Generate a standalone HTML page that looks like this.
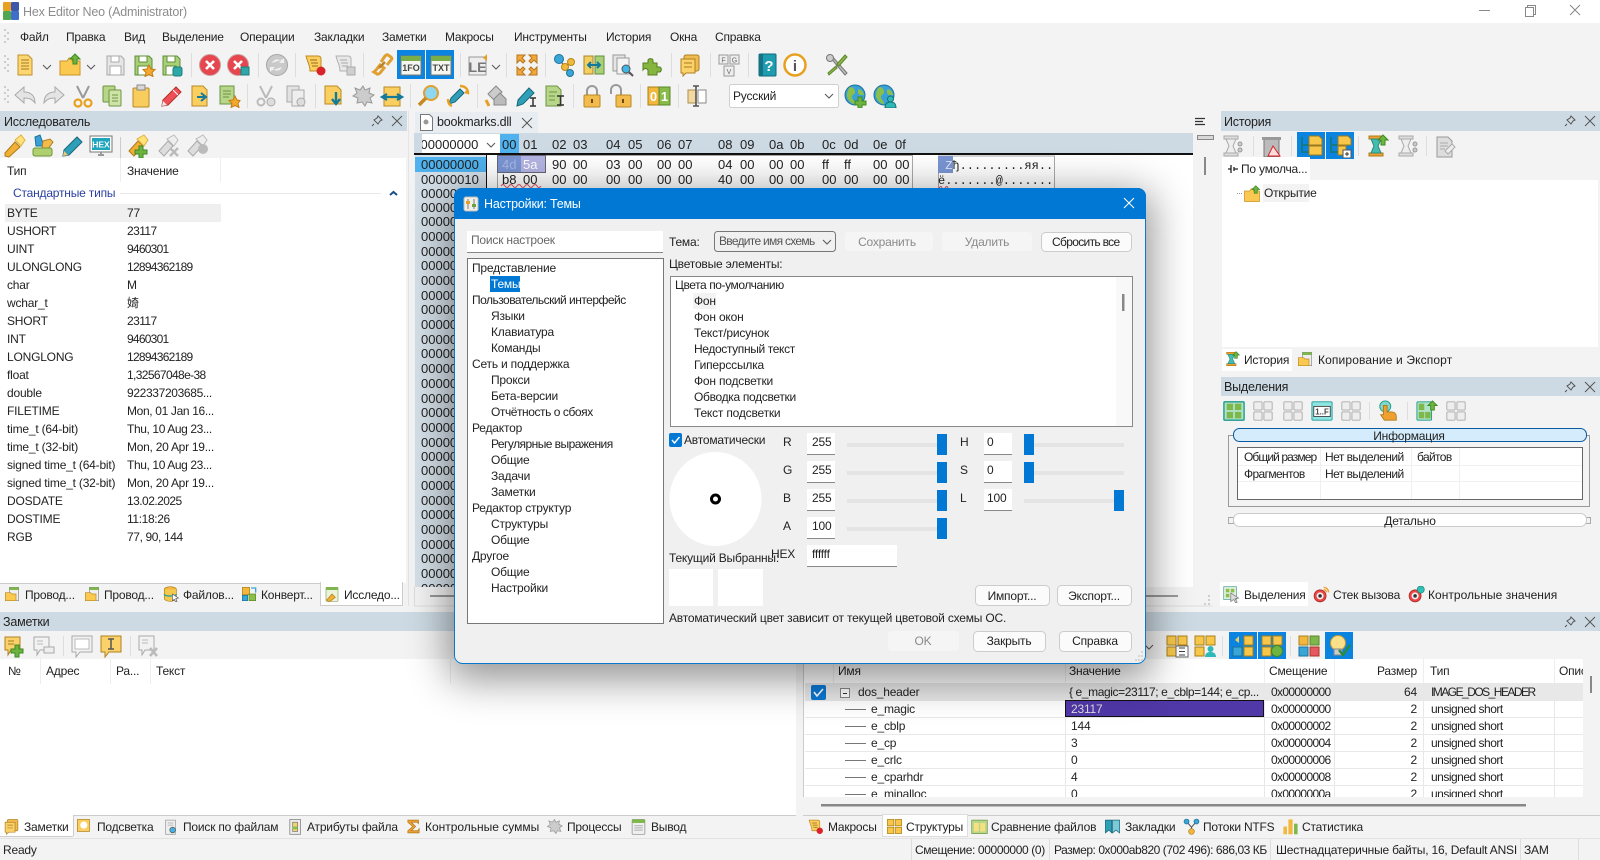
<!DOCTYPE html>
<html lang="ru"><head><meta charset="utf-8"><title>Hex Editor Neo</title>
<style>
html,body{margin:0;padding:0;width:1600px;height:860px;overflow:hidden;background:#f3f3f3}
svg{display:block;font-family:"Liberation Sans","Noto Sans CJK SC",sans-serif;font-size:12px;letter-spacing:-.2px;fill:#222}
svg text{white-space:pre}
.h{font-size:13px;letter-spacing:0}
.m{font-family:"Liberation Mono",monospace;letter-spacing:0}
.g{fill:#8a8a8a}
#dlg{position:absolute;left:454px;top:188px;width:692px;height:476px;border-radius:8px;box-shadow:0 10px 40px 6px rgba(0,0,0,.42)}
#base{position:absolute;left:0;top:0}
</style></head><body>
<svg id="base" width="1600" height="860" viewBox="0 0 1600 860">
<defs>
<symbol id="doc" viewBox="0 0 24 24"><path d="M5 2h10l4 4v16H5z" fill="#fcd771" stroke="#c2922f"/><path d="M8 7h8M8 10h8M8 13h8M8 16h8" stroke="#a87b1e"/></symbol>
<symbol id="fld" viewBox="0 0 24 24"><path d="M2 8h7l2-3h3v3h8v14H2z" fill="#fbc94f" stroke="#c89328"/><path d="M17 1l5 5h-3v5h-4V6h-3z" fill="#6fb43f" stroke="#3e8a25"/></symbol>
<symbol id="fg" viewBox="0 0 24 24"><path d="M4 3h14l3 3v16H4z" fill="#e6e6e6" stroke="#a9a9a9"/><rect x="8" y="3" width="8" height="6" fill="#fff" stroke="#aaa"/><rect x="7" y="13" width="11" height="9" fill="#fff" stroke="#aaa"/></symbol>
<symbol id="fs" viewBox="0 0 24 24"><path d="M3 3h14l3 3v16H3z" fill="#a9cf78" stroke="#5f8f35"/><rect x="7" y="3" width="8" height="6" fill="#fff" stroke="#5f8f35"/><rect x="6" y="13" width="10" height="9" fill="#fff" stroke="#5f8f35"/><path d="M17 12l2 4 4 .5-3 3 1 4-4-2-4 2 1-4-3-3 4-.5z" fill="#f3a92f" stroke="#c47c12"/></symbol>
<symbol id="fb" viewBox="0 0 24 24"><path d="M3 3h14l3 3v16H3z" fill="#a9cf78" stroke="#5f8f35"/><rect x="7" y="3" width="8" height="6" fill="#fff" stroke="#5f8f35"/><rect x="6" y="13" width="10" height="9" fill="#fff" stroke="#5f8f35"/><rect x="13" y="14" width="9" height="9" rx="2" fill="#2fa7a7" stroke="#1c7c7c"/></symbol>
<symbol id="xr" viewBox="0 0 24 24"><circle cx="12" cy="12" r="10.5" fill="#e6474f" stroke="#c8a0a0"/><path d="M8 8l8 8M16 8l-8 8" stroke="#fff" stroke-width="2.6"/></symbol>
<symbol id="xb" viewBox="0 0 24 24"><circle cx="11" cy="12" r="10.5" fill="#e6474f" stroke="#c8a0a0"/><path d="M7 8l8 8M15 8l-8 8" stroke="#fff" stroke-width="2.6"/><rect x="14" y="14" width="8" height="8" fill="#2fa7a7" stroke="#1c7c7c"/></symbol>
<symbol id="rf" viewBox="0 0 24 24"><circle cx="12" cy="12" r="10.5" fill="#c9c9c9" stroke="#a5a5a5"/><path d="M7 10a5.500 5.500 0 0 1 9-2l-2 2h5V5l-1.500 1.500M17 14a5.500 5.500 0 0 1-9 2l2-2H5v5l1.500-1.500" fill="#f0f0f0"/></symbol>
<symbol id="sc" viewBox="0 0 24 24"><path d="M3 3h12c2 0 3 1 3 3v12H7c0-3 0-3-1-6S4 7 3 3z" fill="#fbcf5f" stroke="#c08a20"/><path d="M7 7h7M8 10h7M9 13h6" stroke="#9a6e16"/><circle cx="18" cy="18" r="4.500" fill="#d8232a"/></symbol>
<symbol id="sg" viewBox="0 0 24 24"><path d="M3 3h12c2 0 3 1 3 3v12H7c0-3 0-3-1-6S4 7 3 3z" fill="#e8e8e8" stroke="#b0b0b0"/><path d="M7 7h7M8 10h7M9 13h6" stroke="#aaa"/><rect x="14" y="14" width="8" height="8" fill="#cfcfcf" stroke="#aaa"/></symbol>
<symbol id="ch" viewBox="0 0 24 24"><path d="M4 19l3 2c1 .5 2 0 3-1l4-5-4-3-4 5c-1 1-1 1.500-2 2zM11 9l4-6c1-1 2-1.500 3-1l3 2c1 1 1 2 0 3l-4 5" fill="none" stroke="#e0a030" stroke-width="3"/><path d="M9 15l6-6" stroke="#b8862a" stroke-width="2.500"/></symbol>
<symbol id="w1" viewBox="0 0 24 24"><rect x="2" y="3" width="20" height="19" fill="#f6f6f0" stroke="#777"/><rect x="2" y="3" width="20" height="5" fill="#79ad47"/><text x="12" y="18" text-anchor="middle" style="font-size:9px;font-weight:bold;letter-spacing:0;fill:#444">1FO</text></symbol>
<symbol id="w2" viewBox="0 0 24 24"><rect x="2" y="3" width="20" height="19" fill="#f6f6f0" stroke="#777"/><rect x="2" y="3" width="20" height="5" fill="#79ad47"/><text x="12" y="18" text-anchor="middle" style="font-size:9px;font-weight:bold;letter-spacing:0;fill:#444">TXT</text></symbol>
<symbol id="le" viewBox="0 0 24 24"><rect x="2" y="4" width="17" height="18" fill="#ededed" stroke="#999"/><text x="10.500" y="19" text-anchor="middle" style="font-size:14px;font-weight:bold;letter-spacing:0;fill:#777">LE</text><path d="M20 1v7l-4-3z" fill="#e8a020"/></symbol>
<symbol id="ar" viewBox="0 0 24 24"><path d="M2 2h8l-3 3 3 3-2 2-3-3-3 3zM22 2v8l-3-3-3 3-2-2 3-3-3-3zM2 22v-8l3 3 3-3 2 2-3 3 3 3zM22 22h-8l3-3-3-3 2-2 3 3 3-3z" fill="#f2a93a" stroke="#b6761b"/></symbol>
<symbol id="nd" viewBox="0 0 24 24"><path d="M6 6l6 8 6-5M12 14l5 6" stroke="#446" fill="none"/><circle cx="6" cy="6" r="4.500" fill="#3aa6d8" stroke="#1b7299"/><circle cx="18" cy="9" r="3.500" fill="#f2b93a" stroke="#b6861b"/><circle cx="12" cy="14" r="3.500" fill="#f2b93a" stroke="#b6861b"/><circle cx="17" cy="20" r="3.500" fill="#3aa6d8" stroke="#1b7299"/></symbol>
<symbol id="dc" viewBox="0 0 24 24"><rect x="2" y="3" width="9" height="18" fill="#f2cf5f" stroke="#a9842a"/><rect x="13" y="3" width="9" height="18" fill="#a9cf78" stroke="#5f8f35"/><path d="M6 12h12M9 9l-3 3 3 3M15 9l3 3-3 3" stroke="#157a9a" stroke-width="2" fill="none"/></symbol>
<symbol id="mg" viewBox="0 0 24 24"><rect x="2" y="2" width="12" height="16" fill="#e4e4e4" stroke="#9a9a9a"/><rect x="6" y="5" width="12" height="16" fill="#f4f4f4" stroke="#9a9a9a"/><circle cx="15" cy="16" r="4" fill="#41b6e6" stroke="#555"/><path d="M18 19l4 4" stroke="#555" stroke-width="2"/></symbol>
<symbol id="pz" viewBox="0 0 24 24"><path d="M3 10h5V7a3 3 0 0 1 5 0v3h4v4h3a3 3 0 0 1 0 5h-3v3H8v-5a3 3 0 0 0-5 0z" fill="#86b53f" stroke="#567f22"/></symbol>
<symbol id="nt" viewBox="0 0 24 24"><rect x="6" y="2" width="15" height="16" rx="2" fill="#f0bc52" stroke="#b08020"/><path d="M3 6h14v14H8l-3 3v-3H3z" fill="#fbd26a" stroke="#b08020"/><path d="M6 10h8M6 14h8" stroke="#a87b1e"/></symbol>
<symbol id="fv" viewBox="0 0 24 24"><rect x="2" y="2" width="9" height="9" fill="#eee" stroke="#999"/><rect x="13" y="2" width="9" height="9" fill="#eee" stroke="#999"/><rect x="7" y="13" width="10" height="10" fill="#eee" stroke="#999"/><text x="6.500" y="9.500" text-anchor="middle" style="font-size:7px;letter-spacing:0;fill:#666">F</text><text x="17.500" y="9.500" text-anchor="middle" style="font-size:7px;letter-spacing:0;fill:#666">G</text><text x="12" y="21" text-anchor="middle" style="font-size:7px;letter-spacing:0;fill:#666">V</text></symbol>
<symbol id="qb" viewBox="0 0 24 24"><rect x="4" y="1" width="17" height="22" rx="1" fill="#1f9cb0" stroke="#0d6a7c"/><rect x="4" y="1" width="4" height="22" fill="#147484"/><text x="14" y="18" text-anchor="middle" style="font-size:15px;font-weight:bold;letter-spacing:0;fill:#fff">?</text></symbol>
<symbol id="inf" viewBox="0 0 24 24"><circle cx="12" cy="12" r="10.500" fill="#fff" stroke="#e8a020" stroke-width="2.500"/><text x="12" y="18" text-anchor="middle" style="font-size:15px;font-weight:bold;letter-spacing:0;fill:#555">i</text></symbol>
<symbol id="tl" viewBox="0 0 24 24"><path d="M4 3l2-1 16 18-2 2z" fill="#bbb" stroke="#777"/><path d="M20 2l2 2-8 9-2-2zM11 13l-8 7 1 2 8-7z" fill="#8ab84a" stroke="#5c8428"/><circle cx="5" cy="5" r="3.500" fill="#ccc" stroke="#777"/></symbol>
<symbol id="ud" viewBox="0 0 24 24"><path d="M2 11l9-8v5c6 0 11 3 11 11-3-4-6-5-11-5v5z" fill="#e4e4e4" stroke="#aaa"/></symbol>
<symbol id="rd" viewBox="0 0 24 24"><path d="M22 11l-9-8v5C7 8 2 11 2 19c3-4 6-5 11-5v5z" fill="#e4e4e4" stroke="#aaa"/></symbol>
<symbol id="si" viewBox="0 0 24 24"><path d="M6 2l6 12M18 2l-6 12" stroke="#999" stroke-width="2"/><circle cx="7" cy="19" r="3.500" fill="none" stroke="#e8a020" stroke-width="2.200"/><circle cx="17" cy="19" r="3.500" fill="none" stroke="#e8a020" stroke-width="2.200"/></symbol>
<symbol id="cp" viewBox="0 0 24 24"><rect x="3" y="2" width="12" height="16" rx="1" fill="#b8d68a" stroke="#6b9440"/><rect x="9" y="6" width="12" height="16" rx="1" fill="#cfe3a8" stroke="#6b9440"/><path d="M12 11h6M12 14h6M12 17h6" stroke="#6b9440"/></symbol>
<symbol id="ps" viewBox="0 0 24 24"><rect x="4" y="4" width="16" height="19" rx="1" fill="#f8cd5e" stroke="#b88a24"/><rect x="8" y="1" width="8" height="5" fill="#d8d8d8" stroke="#888"/></symbol>
<symbol id="pn" viewBox="0 0 24 24"><path d="M3 22l1-6L17 3l5 5L9 21z" fill="#f04f57" stroke="#a32"/><path d="M3 22l1-5 4 4z" fill="#eee"/><path d="M14 6l5 5" stroke="#fff"/></symbol>
<symbol id="pb" viewBox="0 0 24 24"><path d="M3 22l1-6L17 3l5 5L9 21z" fill="#2f9fb8" stroke="#17667a"/><path d="M3 22l1-5 4 4z" fill="#f3c773"/></symbol>
<symbol id="pa" viewBox="0 0 24 24"><path d="M4 2h11l4 4v16H4z" fill="#fbcf5f" stroke="#b88a24"/><path d="M9 13h7M13 9l5 4-5 4" stroke="#157a9a" stroke-width="2" fill="none"/></symbol>
<symbol id="ps2" viewBox="0 0 24 24"><rect x="3" y="2" width="14" height="18" fill="#b8d68a" stroke="#6b9440"/><path d="M6 7h8M6 10h8M6 13h6" stroke="#6b9440"/><path d="M18 12l2 4 3 .5-2 3 1 4-4-2-4 2 1-4-3-3 4-.5z" fill="#f3a92f" stroke="#c47c12"/></symbol>
<symbol id="sig" viewBox="0 0 24 24"><path d="M6 2l6 12M18 2l-6 12" stroke="#bbb" stroke-width="2"/><circle cx="7" cy="18" r="3.500" fill="none" stroke="#bbb" stroke-width="2"/><circle cx="17" cy="18" r="4" fill="#ddd" stroke="#aaa"/></symbol>
<symbol id="cg" viewBox="0 0 24 24"><rect x="3" y="2" width="12" height="16" fill="#e2e2e2" stroke="#aaa"/><rect x="8" y="6" width="12" height="16" fill="#eee" stroke="#aaa"/><circle cx="17" cy="18" r="4" fill="#ddd" stroke="#aaa"/></symbol>
<symbol id="dn" viewBox="0 0 24 24"><path d="M3 2h12l4 4v14H3z" fill="#fbcf5f" stroke="#b88a24"/><path d="M14 8v10M10 15l4 5 4-5" stroke="#157a9a" stroke-width="2.400" fill="none"/></symbol>
<symbol id="gr2" viewBox="0 0 24 24"><path d="M12 2l2 4 5-2-1 5 5 2-4 3 2 5-5-1-2 4-3-4-5 1 1-5-5-2 4-3-2-5 5 2z" fill="#ccc" stroke="#999"/></symbol>
<symbol id="lr" viewBox="0 0 24 24"><rect x="4" y="3" width="16" height="19" fill="#fbcf5f" stroke="#b88a24"/><path d="M2 13h20M7 10l-5 3 5 3M17 10l5 3-5 3" stroke="#157a9a" stroke-width="2.200" fill="none"/></symbol>
<symbol id="mag" viewBox="0 0 24 24"><circle cx="14" cy="9" r="7" fill="#8fd6f0" stroke="#e0a030" stroke-width="2"/><path d="M9 14l-7 7" stroke="#c48a20" stroke-width="3.500"/></symbol>
<symbol id="pf" viewBox="0 0 24 24"><path d="M3 20l2-6 9-9 4 4-9 9z" fill="#2f9fb8" stroke="#17667a"/><path d="M14 2c5 0 8 3 8 7l-3-1M6 22c-3-1-4-4-4-7" fill="none" stroke="#e8a020" stroke-width="2.400"/></symbol>
<symbol id="bk" viewBox="0 0 24 24"><path d="M4 10l8-8 6 6-8 8z" fill="#ccc" stroke="#888"/><path d="M10 15l6-6 6 6v6H10z" fill="#bbb" stroke="#888"/><path d="M2 16l3 6" stroke="#e8a020" stroke-width="3"/></symbol>
<symbol id="pi" viewBox="0 0 24 24"><path d="M3 22l1-6L15 4l5 5L9 20z" fill="#2f9fb8" stroke="#17667a"/><path d="M16 14h6M19 14v8M16 22h6" stroke="#333" stroke-width="1.500"/></symbol>
<symbol id="di" viewBox="0 0 24 24"><path d="M3 2h11l4 4v16H3z" fill="#b8d68a" stroke="#6b9440"/><path d="M6 8h8M6 12h6M6 16h6" stroke="#6b9440"/><path d="M14 12h7M17.500 12v9M14 21h7" stroke="#333" stroke-width="1.500"/></symbol>
<symbol id="lk" viewBox="0 0 24 24"><path d="M7 11V7a5 5 0 0 1 10 0v4" fill="none" stroke="#999" stroke-width="2"/><rect x="4" y="11" width="16" height="12" rx="1" fill="#f2bb4c" stroke="#b68a24"/><rect x="11" y="15" width="2" height="4" fill="#6a4a10"/></symbol>
<symbol id="lo" viewBox="0 0 24 24"><path d="M2 10V6a5 5 0 0 1 10 0v5" fill="none" stroke="#999" stroke-width="2"/><rect x="7" y="11" width="15" height="12" rx="1" fill="#f2bb4c" stroke="#b68a24"/><rect x="13" y="15" width="2" height="4" fill="#6a4a10"/></symbol>
<symbol id="o1" viewBox="0 0 24 24"><rect x="1" y="3" width="11" height="18" fill="#f4b73e" stroke="#a8801a"/><rect x="12" y="3" width="11" height="18" fill="#88bb4a" stroke="#5c8428"/><text x="6.500" y="17" text-anchor="middle" style="font-size:13px;font-weight:bold;letter-spacing:0;fill:#fff">0</text><text x="17.500" y="17" text-anchor="middle" style="font-size:13px;font-weight:bold;letter-spacing:0;fill:#fff">1</text></symbol>
<symbol id="ib" viewBox="0 0 24 24"><rect x="3" y="6" width="8" height="13" fill="#f3d9a0" stroke="#a98f50"/><rect x="13" y="6" width="8" height="13" fill="#fff" stroke="#888"/><path d="M8 2h6M11 2v20M8 22h6" stroke="#555" stroke-width="1.600"/></symbol>
<symbol id="gl" viewBox="0 0 24 24"><circle cx="11" cy="11" r="10" fill="#39a0d8" stroke="#1c6f9a"/><path d="M6 3c3 0 5 2 5 5s-3 2-3 5 3 3 3 7c-3 0-7-3-8-8 0-3 1-7 3-9zM15 5c3 1 5 4 5 6h-4c-2 0-3-5-1-6z" fill="#8abf4a"/><path d="M18 13v4h4v4h-4v3h-4v-3h-3v-4h3v-4z" fill="#6db33f" stroke="#3e8a25"/></symbol>
<symbol id="gu" viewBox="0 0 24 24"><circle cx="11" cy="11" r="10" fill="#39a0d8" stroke="#1c6f9a"/><path d="M6 3c3 0 5 2 5 5s-3 2-3 5 3 3 3 7c-3 0-7-3-8-8 0-3 1-7 3-9zM15 5c3 1 5 4 5 6h-4c-2 0-3-5-1-6z" fill="#8abf4a"/><circle cx="17.500" cy="15" r="3" fill="#2fb8b8" stroke="#177"/><path d="M12 24c0-5 3-6 5.500-6s5.500 1 5.500 6z" fill="#2fb8b8" stroke="#177"/></symbol>
<symbol id="fl" viewBox="0 0 24 24"><path d="M2 19l10-11 5 5-11 10-4-1z" fill="#f0b036" stroke="#b07a18"/><path d="M12 6l6 6 4-6-4-5z" fill="#ffe27a" stroke="#e0b040"/></symbol>
<symbol id="pl" viewBox="0 0 24 24"><path d="M4 3l5-2 4 11H5z" fill="#3a9fd8" stroke="#1b7299"/><path d="M12 7l7-2 3 3-5 7h-6z" fill="#f2bb4c" stroke="#b08020"/><rect x="2" y="14" width="19" height="8" rx="2" fill="#b0d070" stroke="#6c9438"/></symbol>
<symbol id="hx" viewBox="0 0 24 24"><rect x="1" y="2" width="22" height="16" fill="#fff" stroke="#777"/><rect x="3" y="4" width="18" height="12" fill="#1ea4bc"/><text x="12" y="13.500" text-anchor="middle" style="font-size:8.500px;font-weight:bold;letter-spacing:0;fill:#fff">HEX</text><path d="M9 21h6M12 18v3" stroke="#999" stroke-width="2"/></symbol>
<symbol id="fp" viewBox="0 0 24 24"><path d="M2 17l9-10 5 5-9 10z" fill="#f0b036" stroke="#b07a18"/><path d="M10 5l7 7 4-6-4-5z" fill="#ffe27a" stroke="#e0b040"/><path d="M16 12v4h4v4h-4v4h-4v-4H8v-4h4v-4z" fill="#6db33f" stroke="#3e8a25"/></symbol>
<symbol id="fx" viewBox="0 0 24 24"><path d="M2 17l9-10 5 5-9 10z" fill="#ddd" stroke="#aaa"/><path d="M10 5l7 7 4-6-4-5z" fill="#eee" stroke="#bbb"/><path d="M13 14l8 8M21 14l-8 8" stroke="#bbb" stroke-width="2.500"/></symbol>
<symbol id="fd" viewBox="0 0 24 24"><path d="M2 17l9-10 5 5-9 10z" fill="#ddd" stroke="#aaa"/><path d="M10 5l7 7 4-6-4-5z" fill="#eee" stroke="#bbb"/><circle cx="17" cy="15" r="5" fill="#bbb"/></symbol>
<symbol id="hg" viewBox="0 0 24 24"><path d="M4 2h14v3H4zM4 19h14v3H4z" fill="#f0a030" stroke="#b07a18"/><path d="M6 5h10l-3 7 3 7H6l3-7z" fill="#44bdb0" stroke="#2a8a80"/><path d="M18 1l5 5h-3v5h-4V6h-3z" fill="#6fb43f" stroke="#3e8a25"/></symbol>
<symbol id="hz" viewBox="0 0 24 24"><path d="M4 2h14v3H4zM4 19h14v3H4z" fill="#ddd" stroke="#aaa"/><path d="M6 5h10l-3 7 3 7H6l3-7z" fill="#eee" stroke="#aaa"/><circle cx="20" cy="10" r="2" fill="#ccc" stroke="#999"/><circle cx="20" cy="16" r="2" fill="#ccc" stroke="#999"/></symbol>
<symbol id="tr" viewBox="0 0 24 24"><rect x="4" y="5" width="15" height="18" fill="#bbb" stroke="#777"/><rect x="2" y="3" width="19" height="3" fill="#999"/><path d="M13 12l7 10H8z" fill="#fdd" stroke="#d8232a"/></symbol>
<symbol id="fo" viewBox="0 0 24 24"><path d="M3 3v15h8M3 11h8" stroke="#127a8a" stroke-width="2" fill="none"/><path d="M10 2h10l3 3v6H10zM10 12h13v9H10z" fill="#f8c74a" stroke="#9a7a20"/></symbol>
<symbol id="fa" viewBox="0 0 24 24"><path d="M3 3v15h8M3 11h8" stroke="#127a8a" stroke-width="2" fill="none"/><path d="M10 2h10l3 3v6H10z" fill="#f8c74a" stroke="#9a7a20"/><path d="M10 12h8v9h-8z" fill="#f8c74a" stroke="#9a7a20"/><rect x="15" y="16" width="8" height="8" fill="#fff" stroke="#555"/><path d="M17 20h4M19 18v4" stroke="#333"/></symbol>
<symbol id="dg" viewBox="0 0 24 24"><path d="M4 3h11l4 4v16H4z" fill="#ddd" stroke="#999"/><path d="M7 9h8M7 12h8M7 15h5" stroke="#aaa"/><path d="M12 17l7-7 3 3-7 7z" fill="#eee" stroke="#aaa"/></symbol>
<symbol id="gg" viewBox="0 0 24 24"><rect x="2" y="2" width="9" height="9" rx="1" fill="#eee" stroke="#aaa"/><rect x="13" y="2" width="9" height="9" rx="1" fill="#eee" stroke="#aaa"/><rect x="2" y="13" width="9" height="9" rx="1" fill="#eee" stroke="#aaa"/><rect x="13" y="13" width="9" height="9" rx="1" fill="#eee" stroke="#aaa"/></symbol>
<symbol id="gn" viewBox="0 0 24 24"><rect x="1" y="2" width="22" height="20" rx="1" fill="#aee3c8" stroke="#1c9a8a" stroke-width="1.500"/><rect x="4" y="4" width="7" height="7" fill="#7fb84a"/><rect x="13" y="4" width="7" height="7" fill="#7fb84a"/><rect x="4" y="13" width="7" height="7" fill="#7fb84a"/><rect x="13" y="13" width="7" height="7" fill="#7fb84a"/></symbol>
<symbol id="ff" viewBox="0 0 24 24"><rect x="1" y="2" width="22" height="20" rx="1" fill="#8fe6e0" stroke="#1c9a9a"/><rect x="3" y="7" width="18" height="11" fill="#fff" stroke="#444"/><text x="12" y="16" text-anchor="middle" style="font-size:8.500px;font-weight:bold;letter-spacing:0;fill:#444">1..F</text></symbol>
<symbol id="gu2" viewBox="0 0 24 24"><rect x="1" y="2" width="16" height="20" rx="1" fill="#aee3c8" stroke="#1c9a8a"/><rect x="3" y="4" width="6" height="7" fill="#7fb84a"/><rect x="3" y="13" width="6" height="7" fill="#7fb84a"/><rect x="10" y="13" width="6" height="7" fill="#7fb84a"/><path d="M18 1l5 5h-3v5h-4V6h-3z" fill="#6fb43f" stroke="#3e8a25"/></symbol>
<symbol id="hd" viewBox="0 0 24 24"><circle cx="9" cy="7" r="6" fill="#7fd8cc" stroke="#1c9a8a"/><path d="M7 6h4v7h5c3 0 5 2 5 5v4H8l-4-6h3z" fill="#f0a030" stroke="#b07a18"/></symbol>
<symbol id="ns" viewBox="0 0 24 24"><path d="M2 3h15v13H8l-3 5v-5H2z" fill="#fbd26a" stroke="#b08020"/><path d="M5 7h6M5 10h6" stroke="#a87b1e"/><path d="M16 11v4h4v4h-4v4h-4v-4H8v-4h4v-4z" fill="#6db33f" stroke="#3e8a25"/></symbol>
<symbol id="nz" viewBox="0 0 24 24"><path d="M2 3h15v13H8l-3 5v-5H2z" fill="#f2f2f2" stroke="#aaa"/><path d="M5 7h6M5 10h6" stroke="#bbb"/><rect x="12" y="13" width="10" height="6" fill="#eee" stroke="#aaa"/></symbol>
<symbol id="ni" viewBox="0 0 24 24"><path d="M2 2h20v16H10l-4 5v-5H2z" fill="#fbd26a" stroke="#b08020"/><path d="M9 5h6M12 5v10M9 15h6" stroke="#555" stroke-width="1.500"/></symbol>
<symbol id="no" viewBox="0 0 24 24"><path d="M2 2h20v16H10l-4 5v-5H2z" fill="#f2f2f2" stroke="#aaa"/><rect x="5" y="5" width="14" height="10" fill="#fff" stroke="#bbb"/></symbol>
<symbol id="nx" viewBox="0 0 24 24"><path d="M2 2h15v14H8l-3 5v-5H2z" fill="#f2f2f2" stroke="#aaa"/><path d="M5 6h6M5 9h6" stroke="#bbb"/><path d="M13 14l7 8M20 14l-7 8" stroke="#bbb" stroke-width="2.500"/></symbol>
<symbol id="oo" viewBox="0 0 24 24"><rect x="2" y="2" width="9" height="9" fill="#f8c74a" stroke="#a8801a"/><rect x="13" y="2" width="9" height="9" fill="#f8c74a" stroke="#a8801a"/><rect x="2" y="13" width="9" height="9" fill="#f8c74a" stroke="#a8801a"/><rect x="13" y="13" width="9" height="9" fill="#f8c74a" stroke="#a8801a"/></symbol>
<symbol id="oe" viewBox="0 0 24 24"><rect x="2" y="2" width="9" height="9" fill="#f8c74a" stroke="#a8801a"/><rect x="13" y="2" width="9" height="9" fill="#f8c74a" stroke="#a8801a"/><rect x="2" y="13" width="9" height="9" fill="#f8c74a" stroke="#a8801a"/><rect x="11" y="12" width="12" height="11" fill="#fff" stroke="#666"/><path d="M14 14h6M14 17.500h6M14 21h6" stroke="#444"/></symbol>
<symbol id="ou" viewBox="0 0 24 24"><rect x="2" y="2" width="9" height="9" fill="#f8c74a" stroke="#a8801a"/><rect x="13" y="2" width="9" height="9" fill="#f8c74a" stroke="#a8801a"/><rect x="2" y="13" width="9" height="9" fill="#f8c74a" stroke="#a8801a"/><circle cx="17.500" cy="15" r="3" fill="#2fb8b8"/><path d="M12 23c0-4 3-5 5.500-5s5.500 1 5.500 5z" fill="#2fb8b8"/></symbol>
<symbol id="oa" viewBox="0 0 24 24"><rect x="13" y="2" width="9" height="9" fill="#f8c74a" stroke="#a8801a"/><rect x="2" y="13" width="9" height="9" fill="#3aa6d8" stroke="#1b7299"/><rect x="13" y="13" width="9" height="9" fill="#f8c74a" stroke="#a8801a"/><path d="M8 9V2L4 6z" fill="#e8d060"/></symbol>
<symbol id="ob" viewBox="0 0 24 24"><rect x="2" y="2" width="9" height="9" fill="#f8c74a" stroke="#a8801a"/><rect x="13" y="2" width="9" height="9" fill="#f8c74a" stroke="#a8801a"/><rect x="2" y="13" width="9" height="9" fill="#f8c74a" stroke="#a8801a"/><circle cx="17" cy="17" r="5.500" fill="#6fb43f" stroke="#3e8a25"/></symbol>
<symbol id="oc" viewBox="0 0 24 24"><rect x="2" y="2" width="9" height="9" fill="#f4b73e" stroke="#a8801a"/><rect x="13" y="2" width="9" height="9" fill="#7fb84a" stroke="#5c8428"/><rect x="2" y="13" width="9" height="9" fill="#3aa6d8" stroke="#1b7299"/><rect x="13" y="13" width="9" height="9" fill="#e6575f" stroke="#a32"/></symbol>
<symbol id="bu" viewBox="0 0 24 24"><circle cx="11" cy="9" r="7.500" fill="#fbe08a" stroke="#c09a30"/><rect x="7" y="15" width="8" height="6" fill="#ccc" stroke="#888"/><path d="M12 16l4 5 7-10" fill="none" stroke="#2a8a40" stroke-width="2.400"/></symbol>
<symbol id="ts" viewBox="0 0 24 24"><rect x="2" y="2" width="17" height="17" fill="#fbcf5f" stroke="#b08020"/><rect x="6" y="5" width="10" height="10" rx="5" fill="#fff"/></symbol>
<symbol id="wb" viewBox="0 0 24 24"><rect x="5" y="3" width="14" height="20" fill="#eee" stroke="#999"/><circle cx="15" cy="17" r="4" fill="#41b6e6" stroke="#555"/><path d="M8 7h8M8 10h8" stroke="#aaa"/></symbol>
<symbol id="at" viewBox="0 0 24 24"><rect x="4" y="2" width="15" height="21" fill="#ececec" stroke="#777"/><rect x="8" y="6" width="7" height="13" fill="#f4d36a" stroke="#777"/><rect x="8" y="12" width="7" height="4" fill="#8abf4a"/></symbol>
<symbol id="sm" viewBox="0 0 24 24"><path d="M4 3h15v5l-2-2H9l6 6-6 6h9l2-3v6H4v-3l7-6-7-6z" fill="#f0a030" stroke="#b07a18"/></symbol>
<symbol id="op" viewBox="0 0 24 24"><rect x="3" y="2" width="18" height="21" rx="1" fill="#efefef" stroke="#888"/><rect x="3" y="2" width="18" height="5" fill="#7fb84a"/><path d="M6 11h12M6 14h12M6 17h12" stroke="#888"/></symbol>
<symbol id="cmp" viewBox="0 0 24 24"><rect x="1" y="3" width="22" height="19" fill="#b8d68a" stroke="#6b9440"/><rect x="4" y="7" width="7" height="12" fill="#f8e080"/><rect x="13" y="7" width="7" height="12" fill="#f8e080"/></symbol>
<symbol id="bm" viewBox="0 0 24 24"><path d="M2 3h9v18l-4-4-5 4z" fill="#2f9fb8" stroke="#17667a"/><path d="M12 3h10v18l-5-4-5 4z" fill="#7ccad8" stroke="#17667a"/></symbol>
<symbol id="nf" viewBox="0 0 24 24"><path d="M5 5l7 8 7-8M12 13v5" fill="none" stroke="#555" stroke-width="1.500"/><circle cx="5" cy="5" r="3.500" fill="#3aa6d8" stroke="#1b7299"/><circle cx="19" cy="5" r="3.500" fill="#3aa6d8" stroke="#1b7299"/><circle cx="12" cy="19" r="4" fill="#f4b73e" stroke="#b08020"/></symbol>
<symbol id="st" viewBox="0 0 24 24"><rect x="2" y="12" width="5" height="11" fill="#f4b73e"/><rect x="9" y="2" width="6" height="21" fill="#f4b73e"/><rect x="17" y="8" width="5" height="15" fill="#7fb84a"/></symbol>
<symbol id="ex" viewBox="0 0 24 24"><rect x="8" y="2" width="14" height="20" fill="#eee" stroke="#888"/><path d="M2 10h8l2 2h6v10H2z" fill="#fbc94f" stroke="#b88a24"/><rect x="8" y="2" width="14" height="4" fill="#7fb84a"/></symbol>
<symbol id="db" viewBox="0 0 24 24"><ellipse cx="11" cy="5" rx="9" ry="4" fill="#f4b73e" stroke="#a8801a"/><path d="M2 5v14c0 2 4 4 9 4s9-2 9-4V5" fill="#f4c94e" stroke="#a8801a"/><path d="M2 12c0 2 4 3 9 3s9-1 9-3" fill="none" stroke="#27a0a0" stroke-width="2"/><path d="M14 12l9 6-4 1 2 4-2 1-2-4-3 2z" fill="#fff" stroke="#555"/></symbol>
<symbol id="cv" viewBox="0 0 24 24"><rect x="2" y="2" width="11" height="11" fill="#f4b73e" stroke="#a8801a"/><rect x="12" y="12" width="10" height="10" fill="#8abf4a" stroke="#5c8428"/><rect x="2" y="14" width="8" height="8" fill="#3aa6d8" stroke="#1b7299"/><path d="M15 3h7v7" fill="none" stroke="#3aa6d8" stroke-width="2"/></symbol>
<symbol id="cl" viewBox="0 0 24 24"><rect x="3" y="2" width="18" height="21" rx="1" fill="#eaf4d8" stroke="#8a9a6a"/><rect x="3" y="2" width="18" height="4" fill="#7fb84a"/><path d="M4 21l8-9 5 5-9 7z" fill="#f0b036" stroke="#b07a18"/></symbol>
<symbol id="te" viewBox="0 0 24 24"><circle cx="10" cy="14" r="8.500" fill="#e44" stroke="#922"/><circle cx="10" cy="14" r="5" fill="#eee"/><circle cx="10" cy="14" r="2.500" fill="#333"/><path d="M15 2c4 0 7 3 7 7M15 5c2 0 4 2 4 4" fill="none" stroke="#f0a030" stroke-width="2"/></symbol>
<symbol id="tw" viewBox="0 0 24 24"><circle cx="10" cy="14" r="8.500" fill="#e44" stroke="#922"/><circle cx="10" cy="14" r="5" fill="#eee"/><circle cx="10" cy="14" r="2.500" fill="#333"/><circle cx="18" cy="5" r="5" fill="#2fc0b8" stroke="#187"/></symbol>
<symbol id="sl" viewBox="0 0 24 24"><rect x="1" y="1" width="18" height="18" fill="#e2f0e0" stroke="#44a090"/><rect x="4" y="4" width="5" height="5" fill="#8abf4a"/><rect x="11" y="4" width="5" height="5" fill="#8abf4a"/><rect x="4" y="11" width="5" height="5" fill="#8abf4a"/><path d="M11 10l11 7-5 1 3 5-2 1-3-5-4 3z" fill="#ddd" stroke="#777"/></symbol>
<symbol id="xx" viewBox="0 0 12 12"><path d="M1 1l10 10M11 1L1 11" stroke="#555" fill="none"/></symbol>
<symbol id="pn2" viewBox="0 0 12 12"><path d="M7 1l4 4-2 1-2 3-4-4 3-2zM3 9L1 11" fill="none" stroke="#555"/></symbol>
<symbol id="cd" viewBox="0 0 10 10"><path d="M1 3l4 4 4-4" fill="none" stroke="#555"/></symbol>
</defs>

<rect width="1600" height="860" fill="#f3f3f3"/>
<!-- title bar -->
<rect width="1600" height="23" fill="#fff"/>
<rect x="3" y="2" width="8" height="9" rx="1" fill="#e8a020"/><rect x="11" y="2" width="8" height="9" rx="1" fill="#3b59a8"/><rect x="3" y="11" width="8" height="9" rx="1" fill="#4fa84f"/><rect x="11" y="11" width="8" height="9" rx="1" fill="#3f6fc8"/>
<text x="23" y="16" class="g" textLength="164" style="font-size:12.500px;fill:#8c8c8c">Hex Editor Neo (Administrator)</text>
<path d="M1479 10.500h11" stroke="#888"/>
<rect x="1525.500" y="7.500" width="8" height="9" fill="none" stroke="#888"/><path d="M1527.500 7.500V5.500h8v9h-2" fill="none" stroke="#888"/>
<path d="M1570 5l10 10M1580 5l-10 10" stroke="#888"/>
<!-- menu -->
<g fill="#ccc"><rect x="4" y="29" width="2" height="2"/><rect x="7" y="32" width="2" height="2"/><rect x="4" y="35" width="2" height="2"/><rect x="7" y="38" width="2" height="2"/><rect x="4" y="41" width="2" height="2"/>
<rect x="4" y="55" width="2" height="2"/><rect x="7" y="58" width="2" height="2"/><rect x="4" y="61" width="2" height="2"/><rect x="7" y="64" width="2" height="2"/><rect x="4" y="67" width="2" height="2"/><rect x="7" y="70" width="2" height="2"/>
<rect x="4" y="86" width="2" height="2"/><rect x="7" y="89" width="2" height="2"/><rect x="4" y="92" width="2" height="2"/><rect x="7" y="95" width="2" height="2"/><rect x="4" y="98" width="2" height="2"/><rect x="7" y="101" width="2" height="2"/></g>
<text x="20" y="41">Файл</text><text x="66" y="41">Правка</text><text x="124" y="41">Вид</text><text x="162" y="41">Выделение</text><text x="240" y="41">Операции</text><text x="314" y="41">Закладки</text><text x="382" y="41">Заметки</text><text x="445" y="41">Макросы</text><text x="514" y="41">Инструменты</text><text x="606" y="41">История</text><text x="670" y="41">Окна</text><text x="715" y="41">Справка</text>
<!-- toolbar 1 -->
<rect x="397" y="50" width="28" height="29" fill="#0a84e0"/><rect x="426" y="50" width="28" height="29" fill="#0a84e0"/>
<use href="#doc" x="13" y="53" width="24" height="24"/><use href="#cd" x="42" y="62" width="10" height="10"/>
<use href="#fld" x="58" y="53" width="24" height="24"/><use href="#cd" x="86" y="62" width="10" height="10"/>
<use href="#fg" x="103" y="53" width="24" height="24"/><use href="#fs" x="132" y="53" width="24" height="24"/><use href="#fb" x="160" y="53" width="24" height="24"/>
<use href="#xr" x="198" y="53" width="24" height="24"/><use href="#xb" x="227" y="53" width="24" height="24"/><use href="#rf" x="265" y="53" width="24" height="24"/>
<use href="#sc" x="303" y="53" width="24" height="24"/><use href="#sg" x="333" y="53" width="24" height="24"/><use href="#ch" x="370" y="53" width="24" height="24"/>
<use href="#w1" x="399" y="53" width="24" height="24"/><use href="#w2" x="429" y="53" width="24" height="24"/>
<use href="#le" x="467" y="53" width="24" height="24"/><use href="#cd" x="491" y="62" width="10" height="10"/>
<use href="#ar" x="515" y="53" width="24" height="24"/><use href="#nd" x="553" y="53" width="24" height="24"/><use href="#dc" x="582" y="53" width="24" height="24"/><use href="#mg" x="611" y="53" width="24" height="24"/><use href="#pz" x="640" y="53" width="24" height="24"/>
<use href="#nt" x="678" y="53" width="24" height="24"/><use href="#fv" x="717" y="53" width="24" height="24"/><use href="#qb" x="755" y="53" width="24" height="24"/><use href="#inf" x="783" y="53" width="24" height="24"/><use href="#tl" x="825" y="53" width="24" height="24"/>
<path d="M191.500 53v24M258.500 53v24M295.500 53v24M363.500 53v24M460.500 53v24M506.500 53v24M545.500 53v24M671.500 53v24M710.500 53v24M748.500 53v24" stroke="#ddd"/>
<!-- toolbar 2 -->
<use href="#ud" x="13" y="84" width="24" height="24"/><use href="#rd" x="42" y="84" width="24" height="24"/><use href="#si" x="71" y="84" width="24" height="24"/><use href="#cp" x="100" y="84" width="24" height="24"/><use href="#ps" x="129" y="84" width="24" height="24"/><use href="#pn" x="159" y="84" width="24" height="24"/><use href="#pa" x="188" y="84" width="24" height="24"/><use href="#ps2" x="217" y="84" width="24" height="24"/>
<use href="#sig" x="254" y="84" width="24" height="24"/><use href="#cg" x="284" y="84" width="24" height="24"/><use href="#dn" x="322" y="84" width="24" height="24"/><use href="#gr2" x="351" y="84" width="24" height="24"/><use href="#lr" x="380" y="84" width="24" height="24"/><use href="#mag" x="417" y="84" width="24" height="24"/><use href="#pf" x="446" y="84" width="24" height="24"/><use href="#bk" x="484" y="84" width="24" height="24"/><use href="#pi" x="514" y="84" width="24" height="24"/><use href="#di" x="543" y="84" width="24" height="24"/><use href="#lk" x="580" y="84" width="24" height="24"/><use href="#lo" x="609" y="84" width="24" height="24"/><use href="#o1" x="647" y="84" width="24" height="24"/><use href="#ib" x="685" y="84" width="24" height="24"/>
<path d="M247.500 84v24M315.500 84v24M410.500 84v24M477.500 84v24M573.500 84v24M640.500 84v24M678.500 84v24" stroke="#ddd"/>
<rect x="729.500" y="84.500" width="109" height="23" rx="2" fill="#fff" stroke="#d0d0d0"/><text x="733" y="100">Русский</text><use href="#cd" x="824" y="91" width="10" height="10"/>
<use href="#gl" x="844" y="84" width="24" height="24"/><use href="#gu" x="873" y="84" width="24" height="24"/>

<!-- left panel -->
<rect x="0" y="111" width="407" height="20" fill="#cddae3"/><text x="4" y="126" style="font-size:12.500px">Исследователь</text>
<use href="#pn2" x="371" y="115" width="12" height="12"/><use href="#xx" x="391" y="115" width="12" height="12"/>
<use href="#fl" x="3" y="134" width="24" height="24"/><use href="#pl" x="31" y="134" width="24" height="24"/><use href="#pb" x="60" y="134" width="24" height="24"/><use href="#hx" x="89" y="134" width="24" height="24"/><use href="#fp" x="127" y="134" width="24" height="24"/><use href="#fx" x="157" y="134" width="24" height="24"/><use href="#fd" x="186" y="134" width="24" height="24"/>
<path d="M120.500 137v21" stroke="#ccc"/>
<rect x="0" y="158" width="406" height="425" fill="#fff"/>
<path d="M120.500 158v24M220.500 158v24" stroke="#eee"/>
<text x="7" y="175">Тип</text><text x="127" y="175">Значение</text>
<text x="13" y="197" style="fill:#2a3f9f">Стандартные типы</text><path d="M120 193.500h261" stroke="#e8e8e8"/><path d="M390 195l3.500-3 3.500 3" fill="none" stroke="#1a4f8a" stroke-width="2"/>
<rect x="5" y="204" width="216" height="18" fill="#efefef"/>
<text x="7" y="217">BYTE</text><text x="127" y="217">77</text>
<text x="7" y="235">USHORT</text><text x="127" y="235" textLength="30">23117</text>
<text x="7" y="253">UINT</text><text x="127" y="253" textLength="42">9460301</text>
<text x="7" y="271">ULONGLONG</text><text x="127" y="271" textLength="66">12894362189</text>
<text x="7" y="289">char</text><text x="127" y="289">M</text>
<text x="7" y="307">wchar_t</text><text x="127" y="307">婍</text>
<text x="7" y="325">SHORT</text><text x="127" y="325" textLength="30">23117</text>
<text x="7" y="343">INT</text><text x="127" y="343" textLength="42">9460301</text>
<text x="7" y="361">LONGLONG</text><text x="127" y="361" textLength="66">12894362189</text>
<text x="7" y="379">float</text><text x="127" y="379" textLength="79">1,32567048e-38</text>
<text x="7" y="397">double</text><text x="127" y="397" textLength="85">922337203685...</text>
<text x="7" y="415">FILETIME</text><text x="127" y="415" textLength="87">Mon, 01 Jan 16...</text>
<text x="7" y="433">time_t (64-bit)</text><text x="127" y="433" textLength="85">Thu, 10 Aug 23...</text>
<text x="7" y="451">time_t (32-bit)</text><text x="127" y="451" textLength="87">Mon, 20 Apr 19...</text>
<text x="7" y="469">signed time_t (64-bit)</text><text x="127" y="469" textLength="85">Thu, 10 Aug 23...</text>
<text x="7" y="487">signed time_t (32-bit)</text><text x="127" y="487" textLength="87">Mon, 20 Apr 19...</text>
<text x="7" y="505">DOSDATE</text><text x="127" y="505" textLength="55">13.02.2025</text>
<text x="7" y="523">DOSTIME</text><text x="127" y="523" textLength="43">11:18:26</text>
<text x="7" y="541">RGB</text><text x="127" y="541" textLength="56">77, 90, 144</text>
<path d="M0 583.500h320" stroke="#ccc"/><rect x="320.500" y="582.500" width="82" height="23" fill="#fff" stroke="#ccc"/><rect x="321" y="580" width="81" height="4" fill="#fff"/>
<use href="#ex" x="4" y="586" width="16" height="16"/><text x="25" y="599">Провод...</text>
<use href="#ex" x="84" y="586" width="16" height="16"/><text x="104" y="599">Провод...</text>
<use href="#db" x="163" y="586" width="16" height="16"/><text x="183" y="599">Файлов...</text>
<use href="#cv" x="241" y="586" width="16" height="16"/><text x="261" y="599">Конверт...</text>
<use href="#cl" x="324" y="586" width="16" height="16"/><text x="344" y="599">Исследо...</text>

<!-- hex panel -->
<rect x="415" y="112" width="123" height="21" fill="#e8edf1"/>
<path d="M420.500 114.500h9l3 3v13h-12z" fill="#fff" stroke="#777"/><circle cx="426" cy="122" r="2.500" fill="#999"/>
<text x="437" y="126" style="font-size:12.500px">bookmarks.dll</text><use href="#xx" x="521" y="117" width="12" height="12"/>
<path d="M1195 118.500h10M1195 121.500h8M1195 124.500h10" stroke="#333" stroke-width="1.200"/>
<rect x="414" y="133" width="779" height="20" fill="#cddae3"/>
<rect x="422" y="134" width="78" height="19" fill="#fff"/>
<text x="420.500" y="149" class="h">00000000</text><rect x="414" y="134" width="8" height="19" fill="#cddae3"/><use href="#cd" x="486" y="140" width="10" height="10"/>
<rect x="500" y="134" width="19" height="19" fill="#4fb1ee"/>
<g class="h"><text x="502" y="149">00</text><text x="523" y="149">01</text><text x="552" y="149">02</text><text x="573" y="149">03</text><text x="606" y="149">04</text><text x="628" y="149">05</text><text x="657" y="149">06</text><text x="678" y="149">07</text><text x="718" y="149">08</text><text x="740" y="149">09</text><text x="769" y="149">0a</text><text x="790" y="149">0b</text><text x="822" y="149">0c</text><text x="844" y="149">0d</text><text x="873" y="149">0e</text><text x="895" y="149">0f</text></g>
<rect x="414" y="153" width="779" height="2" fill="#111"/>
<rect x="415" y="155" width="71" height="432" fill="#d5e0e8"/><rect x="486" y="155" width="707" height="432" fill="#fff"/><rect x="486" y="155" width="1" height="432" fill="#111"/>
<rect x="415" y="157" width="71" height="15" fill="#4fb1ee"/>
<g class="h"><text x="421" y="169">00000000</text><text x="421" y="184">00000010</text>
<text x="421" y="198">00000020</text><text x="421" y="212">00000030</text><text x="421" y="226">00000040</text><text x="421" y="241">00000050</text><text x="421" y="256">00000060</text><text x="421" y="270">00000070</text><text x="421" y="285">00000080</text><text x="421" y="300">00000090</text><text x="421" y="314">000000a0</text><text x="421" y="329">000000b0</text><text x="421" y="344">000000c0</text><text x="421" y="358">000000d0</text><text x="421" y="373">000000e0</text><text x="421" y="388">000000f0</text><text x="421" y="403">00000100</text><text x="421" y="417">00000110</text><text x="421" y="432">00000120</text><text x="421" y="447">00000130</text><text x="421" y="461">00000140</text><text x="421" y="475">00000150</text><text x="421" y="490">00000160</text><text x="421" y="505">00000170</text><text x="421" y="519">00000180</text><text x="421" y="534">00000190</text><text x="421" y="549">000001a0</text><text x="421" y="563">000001b0</text><text x="421" y="578">000001c0</text><text x="421" y="593">000001d0</text></g>
<rect x="497.500" y="155.500" width="415" height="40" fill="none" stroke="#aaa"/>
<rect x="498" y="156" width="23" height="17" fill="#7a95d4"/><rect x="521" y="156" width="24" height="17" fill="#b4b4e4"/><rect x="497.500" y="155.500" width="48" height="17" fill="none" stroke="#667"/>
<g class="h"><text x="502" y="169" style="fill:#a8b8e4">4d</text><text x="523" y="169" style="fill:#fff">5a</text><text x="552" y="169">90</text><text x="573" y="169">00</text><text x="606" y="169">03</text><text x="628" y="169">00</text><text x="657" y="169">00</text><text x="678" y="169">00</text><text x="718" y="169">04</text><text x="740" y="169">00</text><text x="769" y="169">00</text><text x="790" y="169">00</text><text x="822" y="169">ff</text><text x="844" y="169">ff</text><text x="873" y="169">00</text><text x="895" y="169">00</text>
<text x="502" y="184">b8</text><text x="523" y="184">00</text><text x="552" y="184">00</text><text x="573" y="184">00</text><text x="606" y="184">00</text><text x="628" y="184">00</text><text x="657" y="184">00</text><text x="678" y="184">00</text><text x="718" y="184">40</text><text x="740" y="184">00</text><text x="769" y="184">00</text><text x="790" y="184">00</text><text x="822" y="184">00</text><text x="844" y="184">00</text><text x="873" y="184">00</text><text x="895" y="184">00</text></g>
<path d="M501 186q2-3 4 0t4 0 4 0 4 0 4 0 4 0 4 0 4 0 4 0 4 0" fill="none" stroke="#e05060"/>
<rect x="938.500" y="156" width="116" height="40" fill="none" stroke="#aaa"/>
<rect x="938" y="156" width="15" height="17" fill="#7a95d4"/>
<text x="938" y="169" class="m"><tspan style="fill:#7a95d4">M</tspan><tspan style="fill:#dfe6f8">Z</tspan>ђ.........яя..</text><text x="938" y="184" class="m">ё.......@.......</text>
<path d="M939 188q2-3 3 0t3 0 3 0 3 0" fill="none" stroke="#e05060"/>
<rect x="1193" y="133" width="20" height="460" fill="#f3f3f3"/><rect x="1197.500" y="135.500" width="16" height="4" fill="#d8d8d8" stroke="#888"/><rect x="1204" y="157" width="2" height="18" fill="#888"/>
<rect x="414" y="587" width="799" height="19" fill="#f3f3f3"/><path d="M414.500 587v19h798" fill="none" stroke="#ddd"/><rect x="430" y="595" width="748" height="2" fill="#999"/>
<path d="M1204 604h2M1208 604h2M1208 600h2M1208 596h2" stroke="#aaa"/>
<rect x="408" y="111" width="1" height="495" fill="#e4e4e4"/>

<!-- right panels -->
<rect x="1221" y="111" width="379" height="20" fill="#cddae3"/><text x="1224" y="126" style="font-size:12.500px">История</text>
<use href="#pn2" x="1564" y="115" width="12" height="12"/><use href="#xx" x="1584" y="115" width="12" height="12"/>
<rect x="1297" y="132" width="28" height="27" fill="#0a84e0"/><rect x="1326" y="132" width="28" height="27" fill="#0a84e0"/>
<use href="#hz" x="1220" y="134" width="24" height="24"/><use href="#tr" x="1260" y="134" width="24" height="24"/><use href="#fo" x="1299" y="134" width="24" height="24"/><use href="#fa" x="1328" y="134" width="24" height="24"/><use href="#hg" x="1365" y="134" width="24" height="24"/><use href="#hz" x="1395" y="134" width="24" height="24"/><use href="#dg" x="1433" y="134" width="24" height="24"/>
<path d="M1253.500 136v20M1291.500 136v20M1358.500 136v20M1426.500 136v20" stroke="#ddd"/>
<rect x="1222" y="157" width="88" height="24" fill="#fff"/><rect x="1222" y="180" width="376" height="167" fill="#fff"/>
<path d="M1231 165v8M1234 167v4M1231 169h-3M1234 169h4" stroke="#222" stroke-width="1.300"/><text x="1241" y="173">По умолча...</text>
<path d="M1237 193.500h6" stroke="#999" stroke-dasharray="1 1"/><rect x="1263" y="184" width="46" height="18" fill="#f3f3f3"/>
<use href="#fld" x="1243" y="185" width="18" height="18"/><text x="1264" y="197">Открытие</text>
<rect x="1222" y="349" width="70" height="22" fill="#fff"/>
<use href="#hg" x="1224" y="351" width="16" height="16"/><text x="1244" y="364">История</text>
<use href="#ex" x="1297" y="351" width="16" height="16"/><text x="1318" y="364" textLength="134">Копирование и Экспорт</text>

<rect x="1221" y="377" width="379" height="19" fill="#cddae3"/><text x="1224" y="391" style="font-size:12.500px">Выделения</text>
<use href="#pn2" x="1564" y="381" width="12" height="12"/><use href="#xx" x="1584" y="381" width="12" height="12"/>
<use href="#gn" x="1223" y="400" width="22" height="22"/><use href="#gg" x="1252" y="400" width="22" height="22"/><use href="#gg" x="1282" y="400" width="22" height="22"/><use href="#ff" x="1311" y="400" width="22" height="22"/><use href="#gg" x="1340" y="400" width="22" height="22"/><use href="#hd" x="1377" y="400" width="22" height="22"/><use href="#gu2" x="1416" y="400" width="22" height="22"/><use href="#gg" x="1445" y="400" width="22" height="22"/>
<path d="M1369.500 402v18M1407.500 402v18" stroke="#ddd"/>
<rect x="1228.500" y="435.500" width="361" height="71" fill="none" stroke="#999"/>
<rect x="1233.500" y="428.500" width="353" height="13" rx="6" fill="#d4ecfb" stroke="#0a5a9f"/><text x="1409" y="440" text-anchor="middle">Информация</text>
<rect x="1237.500" y="447.500" width="345" height="52" fill="#fff" stroke="#666"/>
<path d="M1238 465.500h344M1238 481.500h344M1320.500 448v51M1411.500 448v51M1459.500 448v51" stroke="#f0f0f0"/>
<text x="1244" y="461" textLength="73">Общий размер</text><text x="1325" y="461" textLength="79">Нет выделений</text><text x="1417" y="461" textLength="35">байтов</text>
<text x="1244" y="478" textLength="61">Фрагментов</text><text x="1325" y="478" textLength="79">Нет выделений</text>
<rect x="1228.500" y="517.500" width="5" height="6" fill="none" stroke="#aaa"/><rect x="1585.500" y="517.500" width="5" height="6" fill="none" stroke="#aaa"/>
<rect x="1233.500" y="513.500" width="353" height="13" rx="6" fill="#fff" stroke="#ccc"/><text x="1410" y="525" text-anchor="middle">Детально</text>
<rect x="1220" y="582" width="88" height="24" fill="#fff"/>
<use href="#sl" x="1223" y="586" width="17" height="17"/><text x="1244" y="599">Выделения</text>
<use href="#te" x="1313" y="586" width="17" height="17"/><text x="1333" y="599">Стек вызова</text>
<use href="#tw" x="1408" y="586" width="17" height="17"/><text x="1428" y="599" textLength="129">Контрольные значения</text>

<!-- bottom: notes -->
<rect x="0" y="612" width="1600" height="19" fill="#cddae3"/><text x="3" y="626" style="font-size:12.500px">Заметки</text>
<use href="#pn2" x="1564" y="616" width="12" height="12"/><use href="#xx" x="1584" y="616" width="12" height="12"/>
<use href="#ns" x="3" y="634" width="24" height="24"/><use href="#nz" x="32" y="634" width="24" height="24"/><use href="#no" x="70" y="634" width="24" height="24"/><use href="#ni" x="99" y="634" width="24" height="24"/><use href="#nx" x="137" y="634" width="24" height="24"/>
<path d="M63.500 636v20M130.500 636v20" stroke="#ddd"/>
<rect x="0" y="659" width="796" height="156" fill="#fff"/>
<path d="M40.500 659v25M110.500 659v25M150.500 659v25M450.500 659v25" stroke="#eee"/>
<text x="8" y="675">№</text><text x="46" y="675">Адрес</text><text x="116" y="675">Ра...</text><text x="156" y="675">Текст</text>
<path d="M73 815.500H796" stroke="#ccc"/>
<rect x="0" y="815" width="73" height="21" fill="#fff"/><path d="M73.500 815v21M0 836.500h73" stroke="#ccc"/>
<use href="#nt" x="3" y="818" width="17" height="17"/><text x="24" y="831">Заметки</text>
<use href="#ts" x="76" y="818" width="17" height="17"/><text x="97" y="831">Подсветка</text>
<use href="#wb" x="162" y="818" width="17" height="17"/><text x="183" y="831">Поиск по файлам</text>
<use href="#at" x="287" y="818" width="17" height="17"/><text x="307" y="831">Атрибуты файла</text>
<use href="#sm" x="405" y="818" width="17" height="17"/><text x="425" y="831" textLength="114">Контрольные суммы</text>
<use href="#gr2" x="546" y="818" width="17" height="17"/><text x="567" y="831">Процессы</text>
<use href="#op" x="630" y="818" width="17" height="17"/><text x="651" y="831">Вывод</text>

<!-- structures -->
<rect x="1229" y="632" width="28" height="27" fill="#0a84e0"/><rect x="1258" y="632" width="28" height="27" fill="#0a84e0"/><rect x="1325" y="632" width="28" height="27" fill="#0a84e0"/>
<use href="#cd" x="1144" y="642" width="10" height="10"/>
<use href="#oe" x="1165" y="634" width="24" height="24"/><use href="#ou" x="1193" y="634" width="24" height="24"/><use href="#oa" x="1231" y="634" width="24" height="24"/><use href="#ob" x="1260" y="634" width="24" height="24"/><use href="#oc" x="1297" y="634" width="24" height="24"/><use href="#bu" x="1327" y="634" width="24" height="24"/>
<path d="M1222.500 636v20M1290.500 636v20" stroke="#ddd"/>
<rect x="803" y="659" width="780" height="138" fill="#fff"/><rect x="803" y="659" width="1" height="156" fill="#ccc"/>
<path d="M833.500 659v24M1065.500 659v24M1264.500 659v24M1334.500 659v24M1423.500 659v24M1554.500 659v24" stroke="#eee"/>
<text x="838" y="675">Имя</text><text x="1069" y="675">Значение</text><text x="1269" y="675">Смещение</text><text x="1417" y="675" text-anchor="end">Размер</text><text x="1430" y="675">Тип</text><text x="1559" y="675">Опис</text><rect x="1583" y="659" width="17" height="24" fill="#f3f3f3"/>
<rect x="805" y="683" width="778" height="18" fill="#e8e8e8"/>
<rect x="811" y="685" width="15" height="15" rx="2" fill="#0a78d4"/><path d="M814 692l3 4 6-7" fill="none" stroke="#fff" stroke-width="1.600"/>
<rect x="840.500" y="688.500" width="9" height="9" fill="#fff" stroke="#888"/><path d="M843 693.500h4" stroke="#333"/>
<path d="M805 717.500h778M805 734.500h778M805 751.500h778M805 768.500h778M805 785.500h778M1065.500 701v96M1264.500 701v96M1334.500 701v96M1423.500 701v96M1554.500 701v96" stroke="#e8e8e8" fill="none"/>
<path d="M845 709.500h21M845 726.500h21M845 743.500h21M845 760.500h21M845 777.500h21M845 794.500h21" stroke="#777"/>
<rect x="1065.500" y="700.500" width="198" height="16" fill="#5038a8" stroke="#111"/>
<text x="858" y="696">dos_header</text><text x="1069" y="696" textLength="190">{ e_magic=23117; e_cblp=144; e_cp...</text><text x="1271" y="696" textLength="60">0x00000000</text><text x="1417" y="696" text-anchor="end">64</text><text x="1431" y="696" textLength="105">IMAGE_DOS_HEADER</text>
<text x="871" y="713">e_magic</text><text x="1071" y="713" style="fill:#ddd">23117</text><text x="1271" y="713" textLength="60">0x00000000</text><text x="1417" y="713" text-anchor="end">2</text><text x="1431" y="713" textLength="72">unsigned short</text>
<text x="871" y="730">e_cblp</text><text x="1071" y="730">144</text><text x="1271" y="730" textLength="60">0x00000002</text><text x="1417" y="730" text-anchor="end">2</text><text x="1431" y="730" textLength="72">unsigned short</text>
<text x="871" y="747">e_cp</text><text x="1071" y="747">3</text><text x="1271" y="747" textLength="60">0x00000004</text><text x="1417" y="747" text-anchor="end">2</text><text x="1431" y="747" textLength="72">unsigned short</text>
<text x="871" y="764">e_crlc</text><text x="1071" y="764">0</text><text x="1271" y="764" textLength="60">0x00000006</text><text x="1417" y="764" text-anchor="end">2</text><text x="1431" y="764" textLength="72">unsigned short</text>
<text x="871" y="781">e_cparhdr</text><text x="1071" y="781">4</text><text x="1271" y="781" textLength="60">0x00000008</text><text x="1417" y="781" text-anchor="end">2</text><text x="1431" y="781" textLength="72">unsigned short</text>
<text x="871" y="798">e_minalloc</text><text x="1071" y="798">0</text><text x="1271" y="798" textLength="60">0x0000000a</text><text x="1417" y="798" text-anchor="end">2</text><text x="1431" y="798" textLength="72">unsigned short</text>
<rect x="803" y="797" width="797" height="18" fill="#f3f3f3"/>
<rect x="821" y="804" width="705" height="2.500" fill="#888"/>
<rect x="1590" y="676" width="2" height="17" fill="#888"/>
<path d="M803 815.500h79M967 815.500h633" stroke="#ccc"/>
<rect x="882.500" y="814.500" width="85" height="22" fill="#fff" stroke="#ddd"/>
<use href="#sc" x="807" y="818" width="17" height="17"/><text x="828" y="831">Макросы</text>
<use href="#oo" x="886" y="818" width="17" height="17"/><text x="906" y="831">Структуры</text>
<use href="#cmp" x="971" y="818" width="17" height="17"/><text x="991" y="831">Сравнение файлов</text>
<use href="#bm" x="1104" y="818" width="17" height="17"/><text x="1125" y="831">Закладки</text>
<use href="#nf" x="1183" y="818" width="17" height="17"/><text x="1203" y="831">Потоки NTFS</text>
<use href="#st" x="1282" y="818" width="17" height="17"/><text x="1302" y="831">Статистика</text>
<!-- status -->
<rect x="0" y="838" width="1600" height="1" fill="#e2e2e2"/>
<text x="3" y="854">Ready</text>
<path d="M911.500 839v21M1049.500 839v21M1270.500 839v21M1520.500 839v21M1578.500 839v21" stroke="#ddd"/>
<text x="915" y="854" textLength="130">Смещение: 00000000 (0)</text><text x="1054" y="854" textLength="213">Размер: 0x000ab820 (702 496): 686,03 КБ</text><text x="1276" y="854" textLength="241">Шестнадцатеричные байты, 16, Default ANSI</text><text x="1524" y="854">ЗАМ</text>
</svg>

<div id="dlg">
<svg width="692" height="476" viewBox="454 188 692 476">
<rect x="454.500" y="188.500" width="691" height="475" rx="8" fill="#f0f0f0" stroke="#0a78c8"/>
<path d="M454 219v-23a8 8 0 0 1 8-8h676a8 8 0 0 1 8 8v23z" fill="#0078d4"/>
<rect x="464" y="197" width="14" height="14" rx="2" fill="#f0f0e8" stroke="#bbb"/><path d="M468 199v10M474 199v10" stroke="#777"/><rect x="466" y="201" width="4" height="3" fill="#e0a030"/><rect x="472" y="204" width="4" height="3" fill="#6fa040"/>
<text x="484" y="208" style="fill:#fff;font-size:12.500px">Настройки: Темы</text>
<path d="M1124 198l10 10M1134 198l-10 10" stroke="#fff" stroke-width="1.100"/>

<rect x="467" y="231" width="196" height="21" fill="#fff"/><path d="M467 252.500h196" stroke="#888"/>
<text x="471" y="244" style="fill:#666">Поиск настроек</text>
<rect x="467.500" y="258.500" width="196" height="365" fill="#fff" stroke="#777"/>
<rect x="490" y="276" width="30" height="16" fill="#0078d4"/>
<text x="472" y="272">Представление</text><text x="491" y="288" style="fill:#fff">Темы</text>
<text x="472" y="304" textLength="154">Пользовательский интерфейс</text><text x="491" y="320">Языки</text><text x="491" y="336">Клавиатура</text><text x="491" y="352">Команды</text>
<text x="472" y="368">Сеть и поддержка</text><text x="491" y="384">Прокси</text><text x="491" y="400">Бета-версии</text><text x="491" y="416" textLength="102">Отчётность о сбоях</text>
<text x="472" y="432">Редактор</text><text x="491" y="448" textLength="122">Регулярные выражения</text><text x="491" y="464">Общие</text><text x="491" y="480">Задачи</text><text x="491" y="496">Заметки</text>
<text x="472" y="512">Редактор структур</text><text x="491" y="528">Структуры</text><text x="491" y="544">Общие</text>
<text x="472" y="560">Другое</text><text x="491" y="576">Общие</text><text x="491" y="592">Настройки</text>

<text x="669" y="246">Тема:</text>
<rect x="714.500" y="231.500" width="121" height="20" rx="3" fill="#f0f0f0" stroke="#777"/>
<text x="719" y="245" style="fill:#555" textLength="96">Введите имя схемь</text><use href="#cd" x="822" y="237" width="10" height="10"/>
<rect x="845" y="232" width="88" height="19" rx="3" fill="#f5f5f5"/><text x="887" y="246" text-anchor="middle" style="fill:#8a8a8a">Сохранить</text>
<rect x="942" y="232" width="90" height="19" rx="3" fill="#f5f5f5"/><text x="987" y="246" text-anchor="middle" style="fill:#8a8a8a">Удалить</text>
<rect x="1041.500" y="232.500" width="90" height="19" rx="4" fill="#fbfbfb" stroke="#ccc"/><text x="1086" y="246" text-anchor="middle" textLength="68">Сбросить все</text>
<text x="669" y="268">Цветовые элементы:</text>
<rect x="670.500" y="276.500" width="462" height="150" fill="#fff" stroke="#888"/>
<rect x="1116" y="277" width="16" height="149" fill="#f8f8f8"/><rect x="1122" y="294" width="2.500" height="17" fill="#888"/>
<text x="675" y="289" textLength="109">Цвета по-умолчанию</text><rect x="693" y="293" width="23" height="16" fill="#f3f3f3"/>
<text x="694" y="305">Фон</text><text x="694" y="321">Фон окон</text><text x="694" y="337">Текст/рисунок</text><text x="694" y="353" textLength="101">Недоступный текст</text><text x="694" y="369">Гиперссылка</text><text x="694" y="385">Фон подсветки</text><text x="694" y="401" textLength="102">Обводка подсветки</text><text x="694" y="417">Текст подсветки</text>

<rect x="669" y="433" width="13" height="14" rx="2" fill="#0078d4"/><path d="M672 440l2.500 3 5-6" fill="none" stroke="#fff" stroke-width="1.400"/>
<text x="684" y="444">Автоматически</text>
<ellipse cx="715.500" cy="499" rx="46" ry="47" fill="#fff"/><circle cx="715.500" cy="499" r="4" fill="none" stroke="#000" stroke-width="3"/>

<g id="rows">
<text x="783" y="446">R</text><rect x="807" y="433" width="28" height="21" fill="#fff"/><path d="M807 454.500h28" stroke="#888"/><text x="812" y="446">255</text><rect x="847" y="443" width="100" height="4" fill="#e4e4e4"/><rect x="937" y="434" width="10" height="21" fill="#0078d4"/>
<text x="783" y="474">G</text><rect x="807" y="461" width="28" height="21" fill="#fff"/><path d="M807 482.500h28" stroke="#888"/><text x="812" y="474">255</text><rect x="847" y="471" width="100" height="4" fill="#e4e4e4"/><rect x="937" y="462" width="10" height="21" fill="#0078d4"/>
<text x="783" y="502">B</text><rect x="807" y="489" width="28" height="21" fill="#fff"/><path d="M807 510.500h28" stroke="#888"/><text x="812" y="502">255</text><rect x="847" y="499" width="100" height="4" fill="#e4e4e4"/><rect x="937" y="490" width="10" height="21" fill="#0078d4"/>
<text x="783" y="530">A</text><rect x="807" y="517" width="28" height="21" fill="#fff"/><path d="M807 538.500h28" stroke="#888"/><text x="812" y="530">100</text><rect x="847" y="527" width="100" height="4" fill="#e4e4e4"/><rect x="937" y="518" width="10" height="21" fill="#0078d4"/>
<text x="960" y="446">H</text><rect x="984" y="433" width="28" height="21" fill="#fff"/><path d="M984 454.500h28" stroke="#888"/><text x="987" y="446">0</text><rect x="1024" y="443" width="100" height="4" fill="#e4e4e4"/><rect x="1024" y="434" width="10" height="21" fill="#0078d4"/>
<text x="960" y="474">S</text><rect x="984" y="461" width="28" height="21" fill="#fff"/><path d="M984 482.500h28" stroke="#888"/><text x="987" y="474">0</text><rect x="1024" y="471" width="100" height="4" fill="#e4e4e4"/><rect x="1024" y="462" width="10" height="21" fill="#0078d4"/>
<text x="960" y="502">L</text><rect x="984" y="489" width="28" height="21" fill="#fff"/><path d="M984 510.500h28" stroke="#888"/><text x="987" y="502">100</text><rect x="1024" y="499" width="100" height="4" fill="#e4e4e4"/><rect x="1114" y="490" width="10" height="21" fill="#0078d4"/>
</g>
<text x="669" y="562">Текущий Выбранны:</text><text x="771" y="558">HEX</text>
<rect x="807" y="545" width="90" height="21" fill="#fff"/><path d="M807 566.500h90" stroke="#888"/><text x="812" y="558">ffffff</text>
<rect x="669" y="569" width="44" height="37" fill="#fff"/><rect x="718" y="569" width="45" height="37" fill="#fff"/>
<rect x="975.500" y="585.500" width="74" height="20" rx="4" fill="#fbfbfb" stroke="#ccc"/><text x="1012" y="600" text-anchor="middle">Импорт...</text>
<rect x="1057.500" y="585.500" width="74" height="20" rx="4" fill="#fbfbfb" stroke="#ccc"/><text x="1094" y="600" text-anchor="middle">Экспорт...</text>
<text x="669" y="622">Автоматический цвет зависит от текущей цветовой схемы ОС.</text>
<rect x="888" y="631" width="71" height="20" rx="4" fill="#f5f5f5"/><text x="923" y="645" text-anchor="middle" style="fill:#8a8a8a">OK</text>
<rect x="973.500" y="631.500" width="72" height="20" rx="4" fill="#fbfbfb" stroke="#ccc"/><text x="1009" y="645" text-anchor="middle">Закрыть</text>
<rect x="1059.500" y="631.500" width="72" height="20" rx="4" fill="#fbfbfb" stroke="#ccc"/><text x="1095" y="645" text-anchor="middle">Справка</text>
<path d="M1141 652h2M1138 656h2M1141 656h2M1135 660h2M1138 660h2M1141 660h2" stroke="#bbb"/>
</svg>
</div>
</body></html>
